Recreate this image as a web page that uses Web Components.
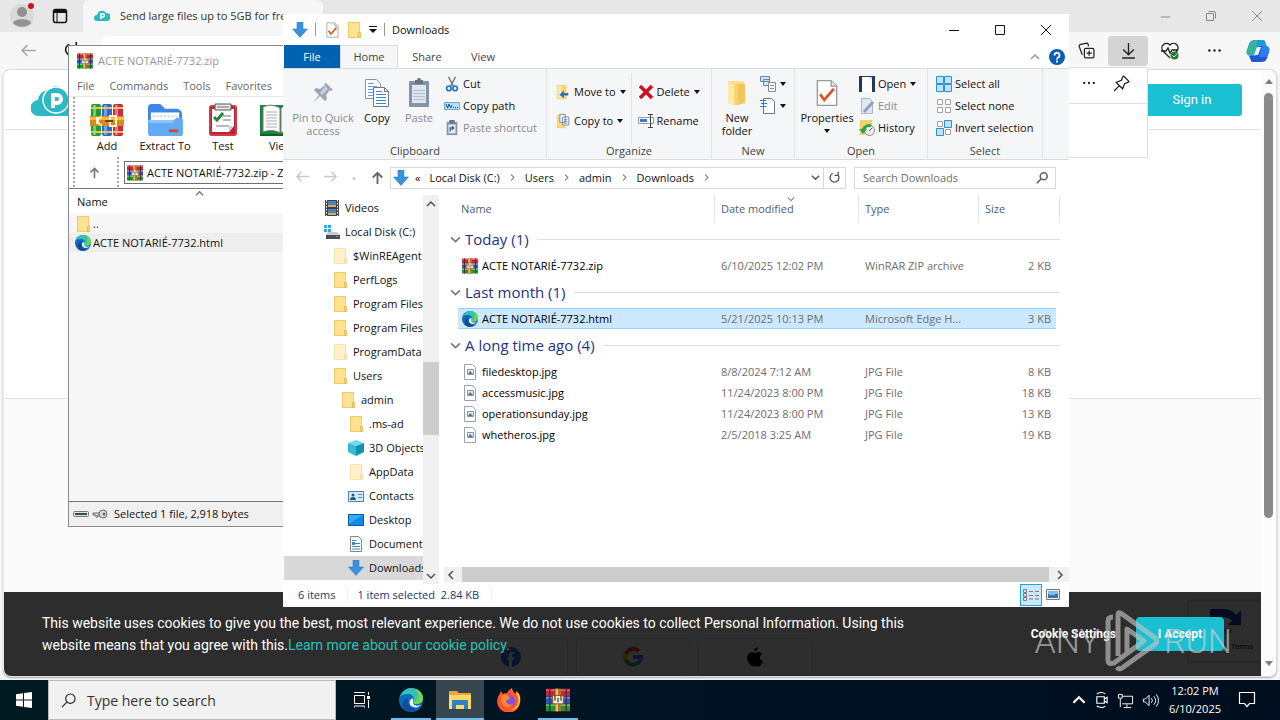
<!DOCTYPE html>
<html lang="en">

<head>
    <meta charset="UTF-8" />
    <title>Desktop</title>
    <meta name="viewport" content="width=device-width, initial-scale=1" />

    <style>
        * {
            box-sizing: border-box;
        }

        html,
        body {
            height: 100%;
            margin: 0;
        }

        body {
            overflow: hidden;
            font: 11px/14px "Open Sans", "Noto Sans", sans-serif;
            color: #111;
        }
    </style>
</head>

<body>
    <desktop-shell></desktop-shell>

    <script>
        // Every icon is an SVG body with its own viewBox
        const ICONS = {
            winrar: ['0 0 32 32', `
                <path fill="#c3263a" d="M0 1h32v10H0z"/><path fill="#e8606c" d="M0 2h32v2H0z"/>
                <path fill="#2d55bd" d="M0 11h32v10H0z"/><path fill="#6a97ee" d="M0 12h32v2H0z"/>
                <path fill="#1f9438" d="M0 21h32v10H0z"/><path fill="#64cf60" d="M0 22h32v2H0z"/>
                <path fill="#5d2440" d="M4 1h2v30H4zM26 1h2v30h-2z"/>
                <path fill="#b5732a" d="M12 1h8v30h-8z"/><path fill="#efc057" d="M13 1h3v30h-3z"/>
                <path fill="#f7f3ea" stroke="#7a4a1c" d="M9 10h14v11H9z"/>
                <path fill="#8a4a18" d="M11 9h2v8h-2zM19 9h2v8h-2zM15 13h2v6h-2z"/>`],
            books: ['0 0 34 34', `
                <rect x="1" y="1" width="10" height="32" rx="2" fill="#1f9a36"/><rect x="12" y="1" width="10" height="32" rx="2" fill="#2f66cf"/><rect x="23" y="1" width="10" height="32" rx="2" fill="#c92a45"/>
                <path fill="#6ed36d" d="M3 2h3v30H3z"/><path fill="#6f9ff2" d="M14 2h3v30h-3z"/><path fill="#f2728a" d="M25 2h3v30h-3z"/>
                <path fill="#e9c64e" d="M1 4h10v2H1zM12 4h10v2H12zM23 4h10v2H23zM1 28h10v2H1zM12 28h10v2H12zM23 28h10v2H23z"/>
                <path fill="#d98a1f" d="M0 13h34v10H0z"/><path fill="#f5bb4c" d="M0 14h34v3H0z"/>
                <path fill="none" stroke="#fff3c8" stroke-width="2" d="M7 14v7M12 14a4 4 0 0 0 0 8M20 13h6v10h-6z"/>
                <path fill="#7a3d10" d="M15 17h8v2h-8z"/>`],
            extract: ['0 0 38 36', `
                <path fill="#3f86e8" d="M1 5a4 4 0 0 1 4-4h9l5 5h12a6 6 0 0 1 6 6v20H1z"/>
                <path fill="#fff" d="M4 10h30v12H4z"/><path stroke="#9bb0c9" d="M6 14h26" stroke-dasharray="2 2"/>
                <path fill="#64abf5" d="M1 18h27l3-2h5a2 2 0 0 1 2 2v14a3 3 0 0 1-3 3H4a3 3 0 0 1-3-3z"/>
                <path fill="#92c6fa" d="M2 18h26v3H2z"/><rect x="23" y="28" width="10" height="3" rx="1" fill="#d6452b"/>`],
            test: ['0 0 30 34', `
                <rect x="1" y="2" width="28" height="31" rx="3" fill="#ba2232"/><rect x="2" y="3" width="26" height="29" rx="2" fill="none" stroke="#e35460"/>
                <path fill="#fff" d="M4 6h22v17l-5 6H4z"/><path fill="#ccc" d="M26 23h-5v6z"/>
                <path fill="#e8e8e8" stroke="#555" d="M7 1h16v6H7z"/><path stroke="#777" d="M9 4h12M15 13h8M15 17h8M8 23h13"/>
                <path fill="none" stroke="#24883a" stroke-width="3" d="M6 14l3 3 6-7"/>`],
            view: ['0 0 42 34', `
                <path fill="#16853a" d="M0 2h42v31H0z"/><path fill="#0b6427" d="M0 31h42v2H0z"/>
                <path fill="#fff" stroke="#777" d="M3 4c6-3 12-2 17 1v25c-5-3-11-3-17-1zM38 4c-6-3-12-2-17 1v25c5-3 11-3 17-1z"/>
                <path stroke="#aaa" d="M6 9h11M6 12h11M6 15h11M6 18h11M6 21h11M6 24h11"/>`],
            folder: ['0 0 16 16', `
                <path fill="#f3cb66" d="M2 0h12v16H2z"/><path fill="#ffe391" d="M3 1h10v14H3z"/>
                <path fill="#fbd772" stroke="#dfae43" stroke-width=".7" d="M12.500 10.500h2v5h-2z"/>`],
            folderopen: ['0 0 20 26', `
                <path fill="#ffe08a" d="M1 1h16v22H1z"/><path fill="#f1c558" d="M9 4h9v19l-7 2z"/>
                <path fill="#ffe9a9" d="M1 2l6 3v20l-6-2z"/><path fill="#f8d36f" d="M7 5h4v20H7z"/>`],
            download: ['0 0 16 16', `<path fill="#3a92dc" stroke="#2777bd" stroke-width=".5" d="M5 0h6v7h4.500L8 15.500.5 7H5z"/>`],
            docheck: ['0 0 16 20', `
                <path fill="#fff" stroke="#9a9a9a" d="M1 1h10l4 4v14H1z"/><path fill="#e9e9e9" stroke="#9a9a9a" d="M11 1v4h4"/>
                <path fill="none" stroke="#dc5326" stroke-width="2" d="M3 11l3 4 7-8"/>`],
            pinq: ['0 0 24 24', `<path fill="#99a6b5" d="M15 2l7 7-2 1-1-1-4 5 1 4-2 2-5-5-7 7 6-8-5-5 2-2 4 1 5-4-1-1z"/><path fill="#c9d0d8" d="M14 5l3 3-6 6-2-2z"/>`],
            copy: ['0 0 26 30', `
                <path fill="#fff" stroke="#8694a6" d="M1.500 1.500h11l4 4v15h-15z"/><path stroke="#6da0dc" d="M4 8.500h9M4 11.500h9M4 14.500h9M4 5.500h6M4 17.500h5"/>
                <path fill="#fff" stroke="#68788d" d="M9.500 9.500h11l4 4v15h-15z"/><path fill="none" stroke="#68788d" d="M20.500 9.500v4h4"/>
                <path stroke="#3f86d2" d="M12 13.500h6M12 16.500h10M12 19.500h10M12 22.500h10M12 25.500h10"/>`],
            paste: ['0 0 22 30', `
                <rect x="1" y="3" width="20" height="26" rx="1" fill="#8493aa"/><path fill="#dfe6ef" d="M4 7h14v18H4z"/>
                <path stroke="#b2bfd0" d="M5 12.500h12M5 15.500h12M5 18.500h12M5 21.500h12"/><path fill="#66758a" d="M7 2h2a2 2 0 0 1 4 0h2v4H7z"/>`],
            cut: ['0 0 16 18', `
                <path stroke="#777" stroke-width="1.500" d="M4 1l6 11M12 1L6 12"/>
                <g fill="none" stroke="#2c7dbd" stroke-width="2"><circle cx="4.500" cy="14" r="2.500"/><circle cx="11.500" cy="14" r="2.500"/></g>`],
            copypath: ['0 0 16 16', `<path fill="#b9dcf4" stroke="#6da9d6" d="M.5 4.500h15v7H.5z"/><path fill="none" stroke="#204e7a" d="M2 6l1.500 4L5 6l1.500 4L8 7M9 9.500h1M11 9.500h1M13 9.500h1"/>`],
            pastelink: ['0 0 16 18', `<rect x="2" y="2" width="12" height="15" fill="#8795a9"/><path fill="#e7ecf3" d="M4 5h8v10H4z"/><path fill="#66758a" d="M5 0h6v4H5z"/><path fill="none" stroke="#4c6487" stroke-width="1.500" d="M6 13V9h4M8 7l2 2-2 2"/>`],
            moveto: ['0 0 16 18', `<path fill="#f7d679" d="M1 1h11v16H1z"/><path fill="#ffe9ab" d="M2 2h4v14H2z"/><path fill="#2c74b8" d="M14 10H9V7l-5 5 5 4v-3h5z"/>`],
            copyto: ['0 0 16 18', `<path fill="#f7d679" d="M1 2h10v15H1z"/><path fill="#fff" stroke="#71849b" d="M4.500 1.500h6v9h-6zM7.500 4.500h7v9h-7z"/><path stroke="#4f8ccb" d="M9 7.500h4M9 9.500h4M9 11.500h4"/>`],
            delete: ['0 0 16 16', `<path stroke="#d0101e" stroke-width="3.500" d="M2 2l12 12M14 2L2 14"/>`],
            rename: ['0 0 16 16', `<path fill="#fff" stroke="#8d9cb0" d="M.5 4.500h15v6H.5z"/><path fill="#3a7cc2" d="M2 6h7v3H2z"/><path fill="none" stroke="#444" d="M10 1.500h5M12.500 1.500v13M10 14.500h5"/>`],
            newitem: ['0 0 16 16', `<path fill="#d3e4f2" stroke="#5b88b0" d="M.5.5h9v5h-9zM3.500 3.500h6v6h-6z"/><path fill="#f6f6f6" stroke="#8a8a8a" d="M8.500 6.500h7v9h-7z"/><path stroke="#8a8a8a" d="M10 9.500h4M10 12.500h4"/>`],
            easy: ['0 0 16 16', `<path fill="#fff" stroke="#6a7684" d="M3.500.5h8l3 3v12h-11z"/><path stroke="#2f7fc4" d="M0 8.500h6M1 5.500h6M0 2.500h6"/>`],
            openw: ['0 0 16 16', `<path fill="#203864" d="M0 0h16v16H0z"/><path fill="#fff" d="M3 1h10v15H3z"/><path fill="#c9d5e6" d="M10 1h3v3z"/>`],
            edit: ['0 0 16 16', `<path fill="#e1e8f1" stroke="#a9b6c6" d="M2.500.5h8l3 3v12h-11z"/><path stroke="#90a1b8" stroke-width="3" d="M14 4L5 14"/>`],
            history: ['0 0 16 16', `<path fill="#f6d067" d="M1 0h12v15H1z"/><circle cx="10.500" cy="10.500" r="5" fill="#eee" stroke="#8a8a8a"/><path fill="none" stroke="#31a14a" stroke-width="3" d="M4 12a6 6 0 0 1 8-6"/><path fill="#31a14a" d="M0 9h8l-4 5z"/><path fill="none" stroke="#555" d="M10 11l3-3"/>`],
            selall: ['0 0 16 16', `<path fill="#bfe3fb" stroke="#2f8fd3" d="M.5.5h7v7h-7zM8.500.5h7v7h-7zM.5 8.500h7v7h-7zM8.500 8.500h7v7h-7z"/>`],
            selnone: ['0 0 16 16', `<path fill="#fff" stroke="#a0a0a0" d="M1.500 1.500h5v5h-5zM9.500 1.500h5v5h-5zM1.500 9.500h5v5h-5zM9.500 9.500h5v5h-5z"/>`],
            selinv: ['0 0 16 16', `<path fill="#fff" stroke="#a0a0a0" d="M1.500 1.500h5v5h-5zM9.500 9.500h5v5h-5z"/><path fill="#bfe3fb" stroke="#2f8fd3" d="M8.500.5h7v7h-7zM.5 8.500h7v7h-7z"/>`],
            caret: ['0 0 8 8', `<path fill="currentColor" d="M1 2h6L4 6z"/>`],
            caretbar: ['0 0 8 8', `<path fill="currentColor" d="M0 0h8v1H0zM0 3h8L4 7z"/>`],
            left: ['0 0 16 16', `<path fill="none" stroke="currentColor" stroke-width="1.500" d="M15 8H2M7 3L2 8l5 5"/>`],
            right: ['0 0 16 16', `<path fill="none" stroke="currentColor" stroke-width="1.500" d="M1 8h13M9 3l5 5-5 5"/>`],
            up: ['0 0 16 16', `<path fill="none" stroke="currentColor" stroke-width="2" d="M8 15V3M3 8l5-5 5 5"/>`],
            cup: ['0 0 10 10', `<path fill="none" stroke="currentColor" stroke-width="1.500" d="M1 7l4-4 4 4"/>`],
            cdown: ['0 0 10 10', `<path fill="none" stroke="currentColor" stroke-width="1.500" d="M1 3l4 4 4-4"/>`],
            cleft: ['0 0 10 10', `<path fill="none" stroke="currentColor" stroke-width="1.500" d="M7 1L3 5l4 4"/>`],
            cright: ['0 0 10 10', `<path fill="none" stroke="currentColor" stroke-width="1.500" d="M3 1l4 4-4 4"/>`],
            refresh: ['0 0 16 16', `<path fill="none" stroke="currentColor" stroke-width="1.600" d="M12.500 5A5.500 5.500 0 1 1 6 3M12.500 1v4.500H8"/>`],
            search: ['0 0 16 16', `<g fill="none" stroke="currentColor" stroke-width="1.800"><circle cx="10" cy="6" r="4"/><path d="M7 9l-5 5"/></g>`],
            bigsearch: ['0 0 16 16', `<g fill="none" stroke="currentColor" stroke-width="1.200"><circle cx="10" cy="6" r="5"/><path d="M6.500 9.500L1 15"/></g>`],
            min: ['0 0 12 12', `<path stroke="currentColor" d="M1 6.500h10"/>`],
            max: ['0 0 12 12', `<path fill="none" stroke="currentColor" d="M1.500 1.500h9v9h-9z"/>`],
            close: ['0 0 12 12', `<path stroke="currentColor" d="M1 1l10 10M11 1L1 11"/>`],
            restore: ['0 0 12 12', `<path fill="none" stroke="currentColor" d="M1.500 3.500h7v7h-7zM3.500 1.500H9A1.500 1.500 0 0 1 10.500 3v5.500"/>`],
            help: ['0 0 16 16', `<circle cx="8" cy="8" r="8" fill="#0a5fae"/><path fill="none" stroke="#fff" stroke-width="1.800" d="M5.500 6.500a2.500 2.500 0 1 1 3.500 2Q8 9 8 10.500M8 11.500v2"/>`],
            video: ['0 0 16 16', `<path fill="#3f444b" d="M1 0h14v16H1z"/><path fill="#4f7fb8" d="M4 1h8v6H4zM4 9h8v6H4z"/><path fill="#d6b257" d="M4 5h8v2H4zM4 13h8v2H4z"/><path stroke="#fff" stroke-dasharray="1.500 1.500" d="M2.500 0v16M13.500 0v16"/>`],
            disk: ['0 0 16 16', `<path fill="#2fa7e6" d="M0 1h3v3H0zM4 1h3v3H4zM0 5h3v3H0zM4 5h3v3H4z"/><path fill="#c7cbd0" d="M4 8h9l3 3H2z"/><path fill="#474d55" d="M2 11h14v4H2z"/><path fill="#51d64b" d="M12 12h2v1h-2z"/>`],
            cube: ['0 0 16 16', `<path fill="#6fdcec" d="M8 0l8 3-8 3-8-3z"/><path fill="#33b9d3" d="M0 3l8 3v10l-8-4z"/><path fill="#1391b4" d="M16 3L8 6v10l8-4z"/>`],
            contacts: ['0 0 16 16', `<path fill="#d8ecf8" stroke="#4a82a8" d="M.5 3.500h15v10H.5z"/><circle cx="5" cy="7" r="1.500" fill="#2a5873"/><path fill="#2a5873" d="M2 12q0-3 3-3t3 3z"/><path stroke="#3d86b8" d="M10 6.500h4M10 9.500h4"/>`],
            monitor: ['0 0 16 16', `<path fill="#0e8ae8" stroke="#075a9e" d="M.5 2.500h15v11H.5z"/><path fill="#36a9f7" d="M1 3h14L1 12z"/>`],
            doc: ['0 0 16 16', `<path fill="#fff" stroke="#7d8a96" d="M2.500.5h8l3 3v12h-11z"/><path stroke="#3b87c2" d="M4 4.500h4M4 7.500h8M4 10.500h8M4 13h8"/><path fill="#3b87c2" d="M4 6h3v3H4z"/>`],
            image: ['0 0 14 16', `<path fill="#fff" stroke="#9aa2aa" d="M1.500.5h8l3 3v12h-11z"/><path fill="#dfe9f2" stroke="#8894a0" d="M4.500 5.500h6v5h-6z"/><path fill="#52718e" d="M5 10l2-3 2 2 1 1z"/>`],
            edge: ['0 0 24 24', `
                <circle cx="12" cy="12" r="12" fill="#0c69bd"/>
                <path fill="#35c1b1" d="M1 9C3 3 8 0 12 0c7 0 12 5 12 10 0 4-3 6-7 6-2 0-3-1-3-2 0-1 1-1 1-3 0-3-3-5-6-5-4 0-7 1-8 3z"/>
                <path fill="#74d34e" d="M17 1c5 2 7 6 7 9 0 4-3 6-7 6-2 0-3-1-3-2 4 0 7-5 3-13z"/>
                <path fill="#134a92" d="M9 10c-2 5 2 11 9 11-4 3-8 3-11 1-5-3-4-10 2-12z"/>
                <path fill="#f2fbff" d="M14 13c-1 3 2 6 8 4-3 3-7 3-10 1-2-2-2-5 0-7 1-1 3-1 2 2z"/>`],
            avatar: ['0 0 24 24', `<circle cx="12" cy="12" r="12" fill="#d9d9d9"/><circle cx="12" cy="8" r="5" fill="#929292"/><path fill="#929292" d="M3 19c1-5 17-5 18 0-4 5-14 5-18 0z"/>`],
            tabs: ['0 0 16 16', `<rect x="1.500" y="1.500" width="13" height="13" rx="2" fill="none" stroke="#111" stroke-width="1.500"/><path fill="#111" d="M2 2h12v3H2z"/><path stroke="#111" d="M5 4v10"/>`],
            cloud: ['0 0 38 34', `
                <path fill="#2bb9c4" d="M8 33a8 8 0 0 1-1-16A11 11 0 0 1 16 7a13 13 0 0 1 22 10v16z"/>
                <circle cx="25" cy="17" r="13" fill="#2bb9c4" stroke="#fff" stroke-width="1.500"/><path fill="none" stroke="#fff" stroke-width="4" d="M22 25V12h4a4 4 0 0 1 0 8h-4"/>`],
            cloudsm: ['0 0 16 12', `<path fill="#2bb9c4" d="M3 11a3 3 0 0 1 0-6 5 5 0 0 1 9-2 4 4 0 0 1 1 8z"/><path fill="none" stroke="#fff" stroke-width="1.500" d="M7 9V4h2a1 1 0 0 1 0 3H7"/>`],
            collections: ['0 0 16 16', `<g fill="none" stroke="#222" stroke-width="1.200"><rect x="6" y="6" width="9" height="9" rx="1.500"/><path d="M4 12L1 4q0-1 1-1.500L8 1q1 0 1.500 1L10 4M10.500 8v5M8 10.500h5"/></g>`],
            dl: ['0 0 16 16', `<path fill="none" stroke="#222" stroke-width="1.300" d="M8 1v11M3 7l5 5 5-5M2 15h12"/>`],
            heart: ['0 0 18 18', `<path fill="none" stroke="#222" stroke-width="1.300" d="M9 16L2 9a4 4 0 0 1 7-6 4 4 0 0 1 7 6l-1 1M0 9h5l2-3 2 5 2-3h6"/><circle cx="13.500" cy="13.500" r="4" fill="#257d2a"/><path fill="none" stroke="#fff" d="M11.500 13.500l1.500 1.500 3-3"/>`],
            dots: ['0 0 16 16', `<g fill="#222"><circle cx="2.500" cy="8" r="1.300"/><circle cx="8" cy="8" r="1.300"/><circle cx="13.500" cy="8" r="1.300"/></g>`],
            pin: ['0 0 16 16', `<path fill="none" stroke="#222" stroke-width="1.200" d="M10 1l5 5-1 1-3 1-2 5-6-6 5-2 1-3zM6 10l-5 5"/>`],
            copilot: ['0 0 24 24', `
                <path fill="#1c9be0" d="M9 1h8c2 0 2 1 3 4l1 3h-7l-3 9H5c-4 0-5-3-4-6l2-6c1-3 3-4 6-4z"/><path fill="#36b39a" d="M3 6c1-3 3-5 6-5h3L8 16H4c-3 0-4-3-3-5z"/>
                <path fill="#1f58d4" d="M15 23H7c-2 0-2-1-3-4l-1-2h7l3-10h6c4 0 5 3 4 6l-2 6c-1 3-3 4-6 4z"/><path fill="#2d7ff0" d="M16 7h3c4 0 5 3 4 6l-2 5h-8z"/><path fill="#f4f9ff" d="M11 8h4l-3 8H8z"/>`],
            facebook: ['0 0 20 20', `<circle cx="10" cy="10" r="10" fill="#1877f2"/><path fill="#fafafa" d="M8 20v-7H6v-3h2V8q0-4 5-3v2q-3-1-2 3h2v3h-2v7z"/>`],
            google: ['0 0 20 20', `<g fill="none" stroke-width="4"><path stroke="#ea4335" d="M3 7a8 8 0 0 1 13-3"/><path stroke="#fbbc05" d="M3 6.500a8 8 0 0 0 0 7"/><path stroke="#34a853" d="M3 13a8 8 0 0 0 12 3"/><path stroke="#4285f4" d="M10 10h8a8 8 0 0 1-3 6"/></g>`],
            apple: ['0 0 18 20', `<path d="M12 0q0 4-4 4 0-3 4-4zM9 6c2-1 5-2 7 1-3 2-3 6 1 7-2 5-4 7-7 5-4 2-8-3-9-7 0-6 4-8 8-6z"/>`],
            captcha: ['0 0 32 28', `<path fill="#1c3aa9" d="M0 14V2h14c6 0 10 3 12 6l5-5v15H18l4-4c-2-3-5-4-8-4v4z"/><path fill="#4285f4" d="M0 14h8q0 3 2 5l-6 5q-4-4-4-10z"/><path fill="#ababab" d="M4 24l6-5q4 4 9 2l4 4q-9 5-19-1z"/>`],
            anyplay: ['0 0 54 62', `<g fill="none" stroke="#c4c4c4" stroke-width="5" stroke-linejoin="round"><path d="M13 46V5q0-4 4-1l32 23q6 4 0 8L17 58q-3 2-5-1"/><path d="M22 42V19l17 12-30 22q-6 2-6-3V11q0-4 5-4"/></g>`],
            drive: ['0 0 16 8', `<rect x=".5" y="1.500" width="15" height="5" rx="1" fill="#dce5e5" stroke="#777"/><path fill="#344a4a" d="M2 3h12v2H2z"/>`],
            key: ['0 0 16 10', `<path fill="#ddd" stroke="#666" d="M1 4h8v2H6v2H4V6H1z"/><circle cx="11" cy="5" r="4" fill="#ddd" stroke="#666"/><circle cx="12" cy="5" r="1.500" fill="#666"/>`],
            tri: ['0 0 10 6', `<path fill="#7d7d7d" d="M5 0l5 6H0z"/>`],
            tridown: ['0 0 10 6', `<path fill="#7d7d7d" d="M0 0h10L5 6z"/>`],
            details: ['0 0 16 12', `<path fill="none" stroke="#7c7c7c" d="M.5.5h3v3h-3zM.5 4.500h3v3h-3zM.5 8.500h3v3h-3zM6 2.500h4M12 2.500h4M6 6.500h4M12 6.500h4M6 10h4M12 10h4"/>`],
            thumbs: ['0 0 14 11', `<path fill="#e8f4fc" stroke="#777" d="M.5.5h13v10H.5z"/><path fill="#3975b0" d="M2 5l5 1 5-2v5H2z"/><path fill="#81bde9" d="M2 2h10v2L7 6 2 5z"/>`],
            windows: ['0 0 16 16', `<path fill="#fff" d="M0 2.300L7 1.200V7.500H0zM8 1.100L16 0v7.500H8zM0 8.500h7v6.300L0 13.700zM8 8.500h8V16l-8-1.100z"/>`],
            taskview: ['0 0 16 16', `<path fill="none" stroke="#fff" d="M.5 3.500h10v8H.5zM.5 1V0M10.500 1V0M.5 15.500V14h10v1.500M14.500 0v3M14.500 8v8M.5.5h10"/><path fill="#fff" d="M13 4h3v3h-3z"/>`],
            explorer: ['0 0 24 20', `<path fill="#e6a83a" d="M1 1h8l2 2h12v16H1z"/><path fill="#ffd867" d="M1 5h22v14H1z"/><path fill="#2e82c9" d="M4 19V11q0-1 1-1h14q1 0 1 1v8h-4v-4H8v4z"/>`],
            firefox: ['0 0 24 24', `
                <path fill="#f9542f" d="M2 7l2-4 2 3q2-1 4-1c1-2 3-4 5-5 0 3 2 4 4 6q1-1 0-3c4 4 5 8 4 12A11.500 11.500 0 1 1 2 7z"/>
                <path fill="#ffc535" d="M14 0c0 3 3 4 5 6q3 3 2 8-1 6-8 8 9 0 10-9c1-5-1-8-4-10 1 2 0 3 0 3-3-2-4-4-5-6z"/>
                <circle cx="12" cy="13" r="6" fill="#8350dc"/><path fill="#ff8a27" d="M4 8q4-3 8 0l1 3q-4 0-4 3 2 4 7 2-3 5-9 2-4-4-3-10z"/>`],
            camera: ['0 0 16 18', `<path fill="none" stroke="#fff" stroke-width="1.200" d="M3 5.500h8v7H3zM11 8l3-2v6l-3-2M3 2.500q5-3 9 0M3 15.500q5 3 9 0"/>`],
            network: ['0 0 18 16', `<path fill="none" stroke="#fff" d="M5.500 3.500h11v8h-11M10.500 12v3M7 15.500h8M1.500 1.500h4v4h-4zM3.500 6v9"/>`],
            sound: ['0 0 18 16', `<path fill="none" stroke="#fff" d="M1.500 6.500h2l4-4v11l-4-4h-2zM10 5.500q2 2.500 0 5M12.500 3.500q4 4.500 0 9M15 1.500q5 6.500 0 13"/>`],
            note: ['0 0 18 18', `<path fill="none" stroke="#fff" stroke-width="1.200" d="M1.500 2.500h15v11h-5l-2.500 3-2.500-3h-5z"/>`]
        };

        /**
         * Registers a custom element with an open shadow root
         * @param {string} tag - element name
         * @param {string} css - styles of the shadow root
         * @param {string|Function} html - markup, or a function of the host
         */
        function define(tag, css, html) {
            customElements.define(tag, class extends HTMLElement {
                connectedCallback() {
                    if (this.shadowRoot) return;
                    const root = this.attachShadow({ mode: 'open' });
                    const body = typeof html === 'function' ? html(this) : html;
                    root.innerHTML = `<style>
                        *, :host { box-sizing: border-box; }
                        button, input { font: inherit; color: inherit; border: 0; padding: 0; margin: 0; background: none; outline: 0; min-width: 0; }
                        a { color: inherit; text-decoration: none; }
                        ${css}
                    </style>${body}`;
                }
            });
        }

        const icon = (name, w = 16, h = w) => `<ui-icon name="${name}" w="${w}" h="${h}"></ui-icon>`;

        define('ui-icon', `
            :host { display: inline-block; flex: none; line-height: 0; }
            svg { display: block; }
        `, (el) => {
            const [box, body] = ICONS[el.getAttribute('name')];
            return `<svg viewBox="${box}" width="${el.getAttribute('w')}" height="${el.getAttribute('h')}" aria-hidden="true">${body}</svg>`;
        });

        // ---------- Explorer parts ----------

        define('ribbon-group', `
            :host { display: flex; flex-direction: column; flex: none; height: 90px; border-right: 1px solid #e2e3e4; }
            .items { flex: 1; display: flex; padding: 4px 8px 0; }
            .label { text-align: center; color: #444; height: 15px; line-height: 14px; }
        `, (el) => `<div class="items"><slot></slot></div><div class="label">${el.getAttribute('label')}</div>`);

        define('big-button', `
            :host { display: block; flex: none; }
            button { width: 100%; display: flex; flex-direction: column; align-items: center; gap: 2px; padding-top: 4px; line-height: 13px; }
            .pic { height: 32px; display: grid; place-items: center; }
            .text { white-space: nowrap; text-align: center; }
            :host([disabled]) button { color: #8a8a8a; }
        `, (el) => `<button ${el.hasAttribute('disabled') ? 'disabled' : ''}>
            <span class="pic">${icon(el.getAttribute('icon'), +el.getAttribute('w'), +el.getAttribute('h'))}</span>
            <span class="text"><slot></slot></span>
        </button>`);

        define('small-button', `
            :host { display: block; }
            button { display: flex; align-items: center; gap: 3px; height: 22px; white-space: nowrap; }
            :host([disabled]) button { color: #8a8a8a; }
        `, (el) => `<button aria-label="${el.getAttribute('label') || el.textContent}" ${el.hasAttribute('disabled') ? 'disabled' : ''}>
            ${icon(el.getAttribute('icon'), 16)}<slot></slot>
            ${el.hasAttribute('drop') ? icon('caret', 8) : ''}
        </button>`);

        define('nav-item', `
            :host { display: block; }
            a { display: flex; align-items: center; gap: 5px; height: 24px; white-space: nowrap; overflow: hidden; }
            :host([current]) a { background: #d9d9d9; }
            :host([faded]) ui-icon { opacity: .5; }
            :host([level="0"]) a { padding-left: 40px; }
            :host([level="1"]) a { padding-left: 48px; }
            :host([level="2"]) a { padding-left: 56px; }
            :host([level="3"]) a { padding-left: 64px; }
        `, (el) => `<a href="#">${icon(el.getAttribute('icon'))}<slot></slot></a>`);

        const FILES = [
            ['Today (1)', [['winrar', 'ACTE NOTARIÉ-7732.zip', '6/10/2025 12:02 PM', 'WinRAR ZIP archive', '2 KB']]],
            ['Last month (1)', [['edge', 'ACTE NOTARIÉ-7732.html', '5/21/2025 10:13 PM', 'Microsoft Edge H...', '3 KB', true]]],
            ['A long time ago (4)', [
                ['image', 'filedesktop.jpg', '8/8/2024 7:12 AM', 'JPG File', '8 KB'],
                ['image', 'accessmusic.jpg', '11/24/2023 8:00 PM', 'JPG File', '18 KB'],
                ['image', 'operationsunday.jpg', '11/24/2023 8:00 PM', 'JPG File', '13 KB'],
                ['image', 'whetheros.jpg', '2/5/2018 3:25 AM', 'JPG File', '19 KB']
            ]]
        ];

        define('file-table', `
            :host { display: block; }
            table { width: 100%; border-collapse: separate; border-spacing: 0; table-layout: fixed; }
            .date { width: 144px; } .type { width: 120px; } .size { width: 81px; }
            th { height: 28px; padding: 0 0 0 6px; font-weight: 400; text-align: left; color: #4c607a; border-right: 1px solid #e5e5e5; position: relative; }
            th:first-child { padding-left: 16px; }
            th ui-icon { position: absolute; top: 0; left: 50%; color: #888; }
            .head { display: flex; align-items: center; gap: 4px; height: 32px; padding-left: 5px; font-size: 15px; line-height: 20px; color: #1e3287; }
            .head ui-icon { color: #777; }
            .head::after { content: ""; flex: 1; height: 1px; margin-left: 4px; background: #dedede; }
            .group { padding: 0; border: 0; }
            td { height: 21px; padding: 0 0 0 6px; color: #6d6d6d; white-space: nowrap; background-clip: padding-box; }
            td:first-child { border-left: 13px solid transparent; padding-left: 4px; color: #000; }
            td:last-child { border-right: 4px solid transparent; padding: 0 5px 0 0; text-align: right; }
            td.group:first-child { border: 0; padding: 0; }
            .name { display: flex; align-items: center; gap: 4px; }
            .sel td { background-color: #cce8ff; box-shadow: inset 0 1px #99d1ff, inset 0 -1px #99d1ff; }
        `, () => `<table>
            <colgroup><col><col class="date"><col class="type"><col class="size"></colgroup>
            <thead><tr><th>Name</th><th>Date modified${icon('cdown', 8)}</th><th>Type</th><th>Size</th></tr></thead>
            <tbody>${FILES.map(([title, rows]) => `
                <tr><td class="group" colspan="4"><div class="head">${icon('cdown', 11)}<span>${title}</span></div></td></tr>
                ${rows.map(([pic, name, date, type, size, sel]) => `<tr class="${sel ? 'sel' : ''}">
                    <td><span class="name">${icon(pic)}${name}</span></td><td>${date}</td><td>${type}</td><td>${size}</td></tr>`).join('')}`).join('')}
            </tbody></table>`);

        define('explorer-window', `
            :host { display: flex; flex-direction: column; background: #fff; overflow: hidden; }
            .title { display: flex; align-items: center; height: 31px; padding-left: 9px; gap: 7px; }
            .rule { width: 1px; height: 13px; background: #999; }
            .rule:first-of-type { margin-right: 3px; }
            .space { flex: 1; }
            .win { display: flex; align-self: stretch; }
            .win button { width: 46px; display: grid; place-items: center; }
            .tabs { display: flex; height: 23px; color: #444; line-height: 22px; align-items: stretch; padding-left: 1px; }
            .tabs button { width: 56px; }
            .tabs .file { background: #0063b1; color: #fff; }
            .tabs .on { width: 58px; background: #f5f6f7; border: 1px solid #dadbdc; border-bottom: 0; margin-right: 1px; }
            .tabs .end { display: flex; align-items: center; gap: 9px; padding-right: 4px; color: #999; }
            .ribbon { display: flex; height: 92px; flex: none; background: #f5f6f7; border-top: 1px solid #dadbdc; border-bottom: 1px solid #dadbdc; padding-left: 1px; }
            .clip { width: 263px; } .org { width: 165px; } .new { width: 83px; } .open { width: 133px; } .select { width: 115px; }
            .pinq { width: 66px; margin-left: -2px; } .copy { width: 42px; } .paste { width: 42px; margin-right: 4px; }
            .pair { display: grid; align-content: start; gap: 7px; padding-top: 8px; margin-right: 4px; }
            .pair + .pair { border-left: 1px solid #e2e3e4; padding-left: 6px; margin: 0; }
            .folder { width: 34px; margin-right: 6px; } .props { width: 48px; margin-right: 8px; }
            .address { display: flex; align-items: center; height: 35px; flex: none; padding: 0 13px 0 12px; color: #666; }
            .navs { display: flex; align-items: center; gap: 13px; width: 95px; }
            .navs .off { color: #c9c9c9; }
            .crumbs { flex: 1; height: 22px; display: flex; align-items: center; border: 1px solid #d9d9d9; color: #111; padding-left: 2px; }
            .crumbs ui-icon, .crumbs span { flex: none; }
            .crumbs nav { display: flex; align-items: center; gap: 9px; padding-left: 6px; white-space: nowrap; flex: 1; }
            .crumbs nav ui-icon { color: #777; }
            .crumbs .down { color: #555; width: 16px; display: grid; place-items: center; }
            .reload { width: 22px; height: 22px; border: 1px solid #d9d9d9; border-left: 0; display: grid; place-items: center; color: #555; }
            .find { display: flex; align-items: center; width: 202px; height: 22px; margin-left: 8px; padding: 0 6px 0 8px; border: 1px solid #d9d9d9; }
            .find input { flex: 1; } .find input::placeholder { color: #6d6d6d; opacity: 1; }
            .body { flex: 1; display: flex; min-height: 0; }
            .tree { width: 140px; padding: 1px 0 0 1px; flex: none; }
            .vbar { width: 16px; flex: none; background: #f0f0f0; display: grid; grid-template-rows: 18px 149px 73px 1fr 17px; place-items: center; color: #505050; margin-bottom: -2px; }
            .vbar i { grid-row: 3; width: 100%; height: 100%; background: #cdcdcd; }
            .vbar ui-icon:last-child { grid-row: 5; }
            main { flex: 1; display: flex; flex-direction: column; min-width: 0; padding-left: 5px; }
            file-table { margin: 0 9px 0 1px; }
            .hbar { display: flex; align-items: center; height: 15px; margin-top: auto; background: #f0f0f0; color: #505050; gap: 6px; padding: 0 4px 0 2px; }
            .hbar i { flex: 1; height: 100%; background: #cdcdcd; }
            .status { display: flex; align-items: center; height: 25px; flex: none; padding: 0 5px 0 15px; color: #22386b; }
            .status span { padding-right: 12px; margin-right: 9px; border-right: 1px solid #f0f0f0; }
            .status button { width: 22px; height: 22px; display: grid; place-items: center; }
            .status .on { background: #cce8ff; border: 1px solid #26a0da; }
        `, `
            <div class="title">
                ${icon('download')}<div class="rule"></div>${icon('docheck', 13, 16)}${icon('folder')}${icon('caretbar', 8)}
                <div class="rule"></div><span>Downloads</span><div class="space"></div>
                <div class="win"><button aria-label="Minimize">${icon('min', 12)}</button><button aria-label="Maximize">${icon('max', 12)}</button><button aria-label="Close">${icon('close', 12)}</button></div>
            </div>
            <div class="tabs">
                <button class="file">File</button><button class="on">Home</button><button>Share</button><button>View</button>
                <div class="space"></div><div class="end">${icon('cup', 10)}${icon('help')}</div>
            </div>
            <div class="ribbon">
                <ribbon-group class="clip" label="Clipboard">
                    <big-button class="pinq" icon="pinq" w="24" h="24" disabled>Pin to Quick<br>access</big-button>
                    <big-button class="copy" icon="copy" w="26" h="30">Copy</big-button>
                    <big-button class="paste" icon="paste" w="22" h="30" disabled>Paste</big-button>
                    <div><small-button icon="cut">Cut</small-button><small-button icon="copypath">Copy path</small-button><small-button icon="pastelink" disabled>Paste shortcut</small-button></div>
                </ribbon-group>
                <ribbon-group class="org" label="Organize">
                    <div class="pair"><small-button icon="moveto" drop>Move to</small-button><small-button icon="copyto" drop>Copy to</small-button></div>
                    <div class="pair"><small-button icon="delete" drop>Delete</small-button><small-button icon="rename">Rename</small-button></div>
                </ribbon-group>
                <ribbon-group class="new" label="New">
                    <big-button class="folder" icon="folderopen" w="20" h="26">New<br>folder</big-button>
                    <div><small-button icon="newitem" label="New item" drop></small-button><small-button icon="easy" label="Easy access" drop></small-button></div>
                </ribbon-group>
                <ribbon-group class="open" label="Open">
                    <big-button class="props" icon="docheck" w="22" h="28">Properties<br>${icon('caret', 8)}</big-button>
                    <div><small-button icon="openw" drop>Open</small-button><small-button icon="edit" disabled>Edit</small-button><small-button icon="history">History</small-button></div>
                </ribbon-group>
                <ribbon-group class="select" label="Select">
                    <div><small-button icon="selall">Select all</small-button><small-button icon="selnone">Select none</small-button><small-button icon="selinv">Invert selection</small-button></div>
                </ribbon-group>
            </div>
            <div class="address">
                <div class="navs"><span class="off">${icon('left', 15)}</span><span class="off">${icon('right', 15)}</span><span class="off">${icon('caret', 6)}</span>${icon('up', 15)}</div>
                <div class="crumbs">${icon('download')}
                    <nav><span>«</span><a href="#">Local Disk (C:)</a>${icon('cright', 7)}<a href="#">Users</a>${icon('cright', 7)}<a href="#">admin</a>${icon('cright', 7)}<a href="#">Downloads</a>${icon('cright', 7)}</nav>
                    <span class="down">${icon('cdown', 9)}</span>
                </div>
                <button class="reload" aria-label="Refresh">${icon('refresh', 13)}</button>
                <label class="find"><input type="search" placeholder="Search Downloads" aria-label="Search Downloads">${icon('search', 14)}</label>
            </div>
            <div class="body">
                <div class="tree">
                    <nav-item level="0" icon="video">Videos</nav-item>
                    <nav-item level="0" icon="disk">Local Disk (C:)</nav-item>
                    <nav-item level="1" icon="folder" faded>$WinREAgent</nav-item>
                    <nav-item level="1" icon="folder">PerfLogs</nav-item>
                    <nav-item level="1" icon="folder">Program Files</nav-item>
                    <nav-item level="1" icon="folder">Program Files</nav-item>
                    <nav-item level="1" icon="folder" faded>ProgramData</nav-item>
                    <nav-item level="1" icon="folder">Users</nav-item>
                    <nav-item level="2" icon="folder">admin</nav-item>
                    <nav-item level="3" icon="folder">.ms-ad</nav-item>
                    <nav-item level="3" icon="cube">3D Objects</nav-item>
                    <nav-item level="3" icon="folder" faded>AppData</nav-item>
                    <nav-item level="3" icon="contacts">Contacts</nav-item>
                    <nav-item level="3" icon="monitor">Desktop</nav-item>
                    <nav-item level="3" icon="doc">Documents</nav-item>
                    <nav-item level="3" icon="download" current>Downloads</nav-item>
                </div>
                <div class="vbar">${icon('cup', 10)}<i></i>${icon('cdown', 10)}</div>
                <main><file-table></file-table><div class="hbar">${icon('cleft', 10)}<i></i>${icon('cright', 10)}</div></main>
            </div>
            <div class="status"><span>6 items</span><span>1 item selected&nbsp; 2.84 KB</span><div class="space"></div>
                <button class="on" aria-label="Details">${icon('details', 16, 12)}</button><button aria-label="Large icons">${icon('thumbs', 14, 11)}</button>
            </div>
        `);

        // ---------- WinRAR ----------

        define('winrar-window', `
            :host { display: flex; flex-direction: column; background: #fff; border: 1px solid #8a8a8a; overflow: hidden; }
            .title { display: flex; align-items: center; gap: 5px; height: 30px; padding-left: 8px; color: #999; }
            .menu { display: flex; gap: 15px; height: 20px; padding-left: 8px; color: #666; line-height: 20px; }
            .bar { display: flex; border-top: 1px solid #e5e5e5; }
            .tools { display: flex; height: 60px; padding-left: 3px; }
            .tools button { width: 58px; display: flex; flex-direction: column; align-items: center; gap: 2px; padding-top: 6px; flex: none; }
            .grip { width: 2px; flex: none; align-self: stretch; margin-left: 4px; background: repeating-linear-gradient(#aaa 0 2px, #fff 2px 4px); }
            .path { display: flex; align-items: center; height: 31px; }
            .path .up { width: 38px; display: grid; place-items: center; color: #777; }
            .path label { display: flex; flex: 1; align-items: center; gap: 4px; height: 23px; margin-left: 5px; padding-left: 2px; border: 1px solid #707070; background: #fff; }
            .path input { flex: 1; }
            .list { flex: 1; background: #f6f6f6; border: 1px solid #777; margin: 0 0 0 -1px; }
            table { width: 100%; border-spacing: 0; }
            th { height: 25px; padding: 0 8px; background: #fff; text-align: left; font-weight: 400; position: relative; }
            th ui-icon { position: absolute; top: 0; left: 126px; color: #777; }
            td { height: 19px; padding: 0 6px; }
            td span { display: flex; align-items: center; gap: 2px; }
            .sel td { background: #eee; }
            .status { display: flex; align-items: center; gap: 3px; height: 24px; background: #f0f0f0; padding-left: 4px; }
            .status span { margin-left: 3px; }
        `, `
            <div class="title">${icon('winrar')}<span>ACTE NOTARIÉ-7732.zip</span></div>
            <div class="menu"><span>File</span><span>Commands</span><span>Tools</span><span>Favorites</span></div>
            <div class="bar"><div class="grip"></div><div class="tools">
                <button>${icon('books', 34)}Add</button><button>${icon('extract', 36, 34)}Extract To</button><button>${icon('test', 30, 34)}Test</button><button>${icon('view', 42, 34)}View</button>
            </div></div>
            <div class="path"><div class="grip"></div><span class="up">${icon('up', 13)}</span><div class="grip"></div>
                <label>${icon('winrar')}<input aria-label="Path" value="ACTE NOTARIÉ-7732.zip - ZIP archive" readonly></label>
            </div>
            <div class="list"><table>
                <thead><tr><th>Name${icon('cup', 9)}</th></tr></thead>
                <tbody><tr><td><span>${icon('folder')}..</span></td></tr><tr class="sel"><td><span>${icon('edge')}ACTE NOTARIÉ-7732.html</span></td></tr></tbody>
            </table></div>
            <div class="status">${icon('drive', 16, 8)}${icon('key', 16, 10)}<span>Selected 1 file, 2,918 bytes</span></div>
        `);

        // ---------- Browser ----------

        define('site-page', `
            :host { display: flex; flex-direction: column; position: relative; background: #fafafa; font: 14px/22px Roboto, sans-serif; overflow: hidden; }
            header { display: flex; align-items: center; justify-content: space-between; height: 60px; padding: 0 19px 0 27px; background: #fff; border-bottom: 1px solid #e3e3e3; }
            header button { width: 100px; height: 32px; border-radius: 3px; background: #1abfd2; color: #fff; font-size: 13px; }
            .hero { height: 269px; background: #fff; border-bottom: 1px solid #e3e3e3; }
            .social { display: flex; justify-content: center; gap: 8px; margin-top: auto; }
            .social button { width: 114px; height: 38px; background: #fff; border: 1px solid #e3e3e3; border-radius: 4px; display: grid; place-items: center; }
            .badge { position: absolute; right: 0; bottom: 15px; width: 72px; height: 60px; background: #f9f9f9; box-shadow: 0 0 3px #888; display: flex; flex-direction: column; align-items: center; gap: 6px; padding: 6px 0 0 2px; font-size: 8px; line-height: 12px; color: #000; }
            .cookies { position: absolute; left: 0; right: 0; bottom: 0; height: 84px; display: flex; align-items: center; justify-content: space-between; padding: 0 37px 0 38px; background: rgba(0, 0, 0, .82); color: #fff; }
            .cookies p { margin: 0; flex: 0 1 870px; }
            .cookies a { color: #26c3b8; }
            .choice { flex: none; display: flex; align-items: center; gap: 20px; font-size: 12px; font-weight: 700; }
            .choice .yes { width: 88px; height: 34px; border-radius: 4px; background: #1abfd2; }
        `, `
            <header>${icon('cloud', 38, 34)}<button>Sign in</button></header>
            <div class="hero"></div>
            <div class="social"><button aria-label="Facebook">${icon('facebook', 20)}</button><button aria-label="Google">${icon('google', 20)}</button><button aria-label="Apple">${icon('apple', 18, 20)}</button></div>
            <div class="badge">${icon('captcha', 32, 28)}<span>Privacy - Terms</span></div>
            <div class="cookies">
                <p>This website uses cookies to give you the best, most relevant experience. We do not use cookies to collect Personal Information. Using this website means that you agree with this.<a href="#">Learn more about our cookie policy.</a></p>
                <div class="choice"><button>Cookie Settings</button><button class="yes">I Accept</button></div>
            </div>
        `);

        define('browser-window', `
            :host { display: flex; flex-direction: column; background: #f7f7f7; }
            .strip { display: flex; align-items: center; height: 32px; flex: none; background: #e7e7e7; padding-left: 10px; }
            .who { display: flex; position: relative; margin-right: 18px; }
            .who i { position: absolute; top: -1px; right: 0; width: 6px; height: 6px; border-radius: 50%; background: #d1121f; }
            .tab { display: flex; align-items: center; gap: 10px; width: 240px; height: 32px; margin-left: 15px; padding-left: 11px; background: #f7f7f7; border-radius: 6px 6px 0 0; color: #333; white-space: nowrap; }
            .space { flex: 1; }
            .win { display: flex; color: #888; }
            .win button { width: 46px; height: 32px; display: grid; place-items: center; }
            .bar { display: flex; align-items: center; height: 37px; flex: none; padding: 0 0 0 20px; color: #aaa; }
            .bar .again { color: #222; margin: 0 22px 0 26px; }
            .omni { flex: 1; height: 30px; border-radius: 6px; background: #fff; padding-left: 18px; display: flex; align-items: center; margin-right: 8px; color: #333; }
            .right { display: flex; align-items: center; }
            .right button { width: 44px; height: 30px; display: grid; place-items: center; }
            .right .on { width: 40px; background: #d4d4d4; border-radius: 4px; }
            .page { flex: 1; display: flex; min-height: 0; margin: 0 3px 3px; background: #fcfcfc; border: 1px solid #ddd; border-left-color: #eaeaea; border-radius: 8px; overflow: hidden; box-shadow: 0 1px 2px #aaa; }
            site-page { flex: 1; }
            .scroll { width: 15px; display: grid; grid-template-rows: 23px 425px 1fr 26px; place-items: center; background: #fcfcfc; }
            .scroll i { width: 9px; height: 100%; border-radius: 5px; background: #8a8a8a; }
            .scroll ui-icon:last-child { grid-row: 4; }
            .fly { position: absolute; top: 67px; right: 132px; width: 360px; height: 91px; background: #fff; border: 1px solid #ddd; }
            .fly div { display: flex; align-items: center; justify-content: flex-end; gap: 17px; height: 36px; padding: 0 17px 5px 0; border-bottom: 1px solid #e0e0e0; }
        `, `
            <div class="strip">
                <span class="who">${icon('avatar', 24)}<i></i></span>${icon('tabs', 16)}
                <div class="tab">${icon('cloudsm', 16, 12)}<span>Send large files up to 5GB for free</span></div>
                <div class="space"></div>
                <div class="win"><button aria-label="Minimize">${icon('min', 11)}</button><button aria-label="Restore">${icon('restore', 12)}</button><button aria-label="Close">${icon('close', 12)}</button></div>
            </div>
            <div class="bar">
                ${icon('left', 17)}<span class="again">${icon('refresh', 17)}</span><div class="omni">${icon('search', 12)}</div>
                <div class="right"><button aria-label="Collections">${icon('collections', 17)}</button><button class="on" aria-label="Downloads">${icon('dl', 17)}</button><button aria-label="Browser essentials">${icon('heart', 18)}</button><button aria-label="More">${icon('dots', 15)}</button><button aria-label="Copilot">${icon('copilot', 24)}</button></div>
            </div>
            <div class="page"><site-page></site-page><div class="scroll">${icon('tri', 8, 5)}<i></i>${icon('tridown', 8, 5)}</div></div>
            <div class="fly"><div>${icon('dots', 14)}${icon('pin', 17)}</div></div>
        `);

        // ---------- Taskbar and watermark ----------

        define('task-bar', `
            :host { display: flex; height: 40px; flex: none; background: linear-gradient(90deg, #001a22, #001322 50%, #000d1e); color: #fff; }
            .app { width: 48px; display: grid; place-items: center; margin-right: 1px; }
            .run { background: linear-gradient(#76b9ed, #76b9ed) bottom / 40px 2px no-repeat; }
            .active { background: linear-gradient(#76b9ed, #76b9ed) bottom / 100% 2px no-repeat #37474f; }
            .app:first-of-type { margin: 0; }
            .find { display: flex; align-items: center; gap: 11px; width: 288px; padding-left: 12px; background: #f1f1f1; border: 1px solid #bbb; color: #222; font-size: 14px; margin-right: 2px; }
            .find input { flex: 1; } .find input::placeholder { color: #333; opacity: 1; }
            .tray { margin-left: auto; display: flex; align-items: center; gap: 8px; }
            .clock { text-align: center; line-height: 18px; margin: 0 9px 0 2px; }
            .tray .note { padding-right: 24px; }
        `, `
            <button class="app" aria-label="Start">${icon('windows', 16)}</button>
            <label class="find">${icon('bigsearch', 15)}<input type="search" aria-label="Search" placeholder="Type here to search"></label>
            <button class="app" aria-label="Task View">${icon('taskview', 16)}</button>
            <button class="app run" aria-label="Edge">${icon('edge', 24)}</button>
            <button class="app active" aria-label="File Explorer">${icon('explorer', 24, 20)}</button>
            <button class="app" aria-label="Firefox">${icon('firefox', 24)}</button>
            <button class="app run" aria-label="WinRAR">${icon('winrar', 24)}</button>
            <div class="tray">${icon('cup', 14)}${icon('camera', 15, 18)}${icon('network', 17)}${icon('sound', 17)}
                <div class="clock">12:02 PM<br>6/10/2025</div><span class="note">${icon('note', 18)}</span></div>
        `);

        define('any-run', `
            :host { display: flex; align-items: center; gap: 5px; font: 300 34px/50px Roboto, "Liberation Sans", sans-serif; color: #d0d0d0; opacity: .65; }
        `, `<span>ANY</span>${icon('anyplay', 54, 62)}<span>RUN</span>`);

        define('desktop-shell', `
            :host { display: flex; flex-direction: column; height: 100vh; min-height: 640px; }
            .area { flex: 1; position: relative; display: flex; overflow: hidden; }
            browser-window { flex: 1; }
            winrar-window { position: absolute; left: 68px; top: 45px; bottom: 153px; width: 560px; }
            explorer-window { position: absolute; left: 283px; right: 211px; top: 14px; bottom: 73px; }
            any-run { position: absolute; right: 48px; bottom: 8px; pointer-events: none; }
        `, `
            <div class="area"><browser-window></browser-window><winrar-window></winrar-window><explorer-window></explorer-window><any-run></any-run></div>
            <task-bar></task-bar>
        `);
    </script>
</body>

</html>
